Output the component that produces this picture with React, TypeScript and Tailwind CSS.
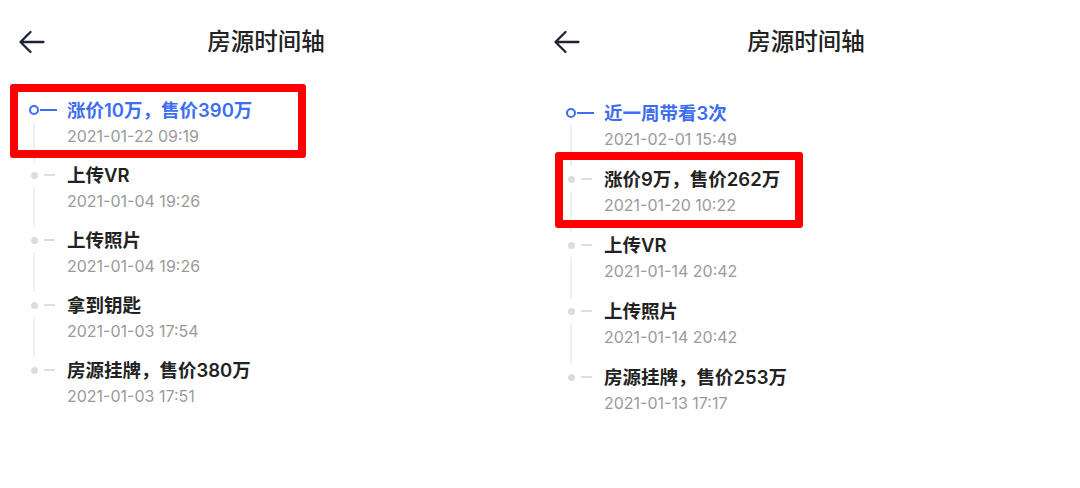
import React from "react";

interface TimelineItem {
  title: string;
  date: string;
}

interface PanelProps {
  items: TimelineItem[];
  padClass: string;
  titleClass: string;
  listClass: string;
  itemClass: string;
  highlight: React.ReactNode;
}

const BackArrow = () => (
  <svg width="27" height="24" viewBox="0 0 27 24" fill="none">
    <path
      d="M25.5 12H2.5M12.5 2L2.5 12L12.5 22"
      stroke="#1e2335"
      strokeWidth="2.3"
      strokeLinecap="round"
      strokeLinejoin="round"
    />
  </svg>
);

const Panel = ({ items, padClass, titleClass, listClass, itemClass, highlight }: PanelProps) => (
  <div className="relative h-full w-[540px]">
    {/* header */}
    <div className={`grid h-[84px] grid-cols-[1fr_auto_1fr] items-center ${padClass}`}>
      <div className="flex items-center">
        <BackArrow />
      </div>
      <h1 className={`text-[23.5px] font-medium text-[#222] ${titleClass}`}>房源时间轴</h1>
      <div />
    </div>

    {/* timeline */}
    <div className={listClass}>
      {items.map((item, i) => {
        const first = i === 0;
        const last = i === items.length - 1;
        return (
          <div key={i} className={`flex ${itemClass}`}>
            <div className="flex w-[12px] flex-col items-center">
              <div className="h-[8px] shrink-0" />
              <div className="flex h-[10px] w-[10px] shrink-0 items-center justify-center">
                {first ? (
                  <div className="h-[10px] w-[10px] rounded-full border-2 border-[#3d6df2]" />
                ) : (
                  <div className="h-[7px] w-[7px] rounded-full bg-[#dcdcdc]" />
                )}
              </div>
              {!last && <div className="mt-[7px] w-[2px] flex-1 bg-[#f0f0f0]" />}
            </div>
            <div className="flex h-[26px] w-[27px] shrink-0 items-center">
              {first ? (
                <div className="h-[2px] w-[17px] bg-[#3d6df2]" />
              ) : (
                <div className="ml-[4px] h-[1.5px] w-[11px] bg-[#dedede]" />
              )}
            </div>
            <div className="flex flex-col">
              <span
                className={`text-[18.5px] font-semibold leading-[26px] ${
                  first ? "text-[#3d6df2]" : "text-[#222]"
                }`}
              >
                {item.title}
              </span>
              <span className="text-[16px] leading-[26px] text-[#9a9a9a]">{item.date}</span>
            </div>
          </div>
        );
      })}
    </div>

    {highlight}
  </div>
);

const leftItems: TimelineItem[] = [
  { title: "涨价10万，售价390万", date: "2021-01-22 09:19" },
  { title: "上传VR", date: "2021-01-04 19:26" },
  { title: "上传照片", date: "2021-01-04 19:26" },
  { title: "拿到钥匙", date: "2021-01-03 17:54" },
  { title: "房源挂牌，售价380万", date: "2021-01-03 17:51" },
];

const rightItems: TimelineItem[] = [
  { title: "近一周带看3次", date: "2021-02-01 15:49" },
  { title: "涨价9万，售价262万", date: "2021-01-20 10:22" },
  { title: "上传VR", date: "2021-01-14 20:42" },
  { title: "上传照片", date: "2021-01-14 20:42" },
  { title: "房源挂牌，售价253万", date: "2021-01-13 17:17" },
];

export default function App() {
  return (
    <div
      className="flex h-[488px] w-[1080px] overflow-hidden bg-white"
      style={{ fontFamily: '"Inter", "Noto Sans CJK SC", sans-serif' }}
    >
      <Panel
        items={leftItems}
        padClass="pl-[18px]"
        titleClass="pr-[26px]"
        listClass="pl-[28px] pt-[13px]"
        itemClass="h-[65px]"
        highlight={
          <div className="absolute left-[10px] top-[84px] h-[74px] w-[296px] rounded-[3px] border-[8px] border-[#ff0000]" />
        }
      />
      <Panel
        items={rightItems}
        padClass="pl-[13px]"
        titleClass="pr-[21px]"
        listClass="pl-[25px] pt-[16px]"
        itemClass="h-[66px]"
        highlight={
          <div className="absolute left-[15px] top-[152px] h-[76px] w-[248px] rounded-[3px] border-[8px] border-[#ff0000]" />
        }
      />
    </div>
  );
}
